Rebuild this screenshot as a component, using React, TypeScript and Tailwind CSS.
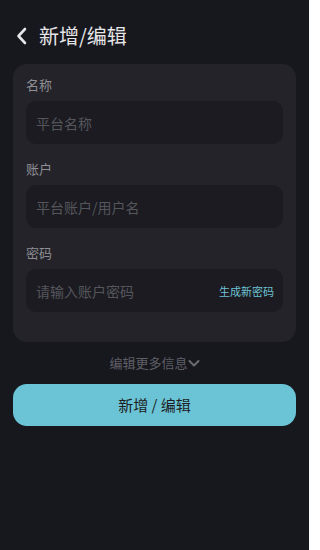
import React from "react";

const font = { fontFamily: '"Noto Sans CJK SC", "Noto Sans", sans-serif' };

function Field({ label, placeholder, right }: { label: string; placeholder: string; right?: React.ReactNode }) {
  return (
    <div className="flex flex-col">
      <div className="text-[13px] leading-[20px] text-[#8e8e94] h-[20px]">{label}</div>
      <div className="mt-[6px] h-[43px] rounded-[10px] bg-[#1b1b21] flex items-center pl-[10px] pr-[9px]">
        <span className="text-[14px] leading-[20px] text-[#55565c] flex-1">{placeholder}</span>
        {right}
      </div>
    </div>
  );
}

export default function App() {
  return (
    <div className="w-[309px] h-[550px] bg-[#17171e] flex flex-col" style={font}>
      <div className="h-[64px] flex items-center pl-[15px] pb-[0px] pt-[8px]">
        <div className="flex items-center">
          <svg width="14" height="18" viewBox="0 0 14 18" className="mr-[10px]">
            <path d="M10 2 L3.5 9 L10 16" fill="none" stroke="#e6e6e8" strokeWidth="2.6" strokeLinecap="round" strokeLinejoin="round" />
          </svg>
          <span className="text-[20px] leading-[28px] text-[#e6e6e8]">新增/编辑</span>
        </div>
      </div>
      <div className="mx-[13px] rounded-[14px] bg-[#232329] px-[13px] pt-[11px] pb-[30px] flex flex-col gap-[15px]">
        <Field label="名称" placeholder="平台名称" />
        <Field label="账户" placeholder="平台账户/用户名" />
        <Field
          label="密码"
          placeholder="请输入账户密码"
          right={<span className="text-[11px] leading-[16px] text-[#6fc2d3]">生成新密码</span>}
        />
      </div>
      <div className="mt-[11px] flex justify-center items-center text-[13px] leading-[20px] text-[#5f5f66]">
        <span>编辑更多信息</span>
        <svg width="12" height="10" viewBox="0 0 12 10">
          <path d="M1.5 3 L6 7.5 L10.5 3" fill="none" stroke="#6a6a70" strokeWidth="2" strokeLinecap="round" strokeLinejoin="round" />
        </svg>
      </div>
      <div className="mx-[13px] mt-[11px] h-[42px] rounded-[14px] bg-[#6bc4d6] flex items-center justify-center">
        <span className="text-[15px] leading-[20px] text-[#1c1d22]">新增 / 编辑</span>
      </div>
    </div>
  );
}
